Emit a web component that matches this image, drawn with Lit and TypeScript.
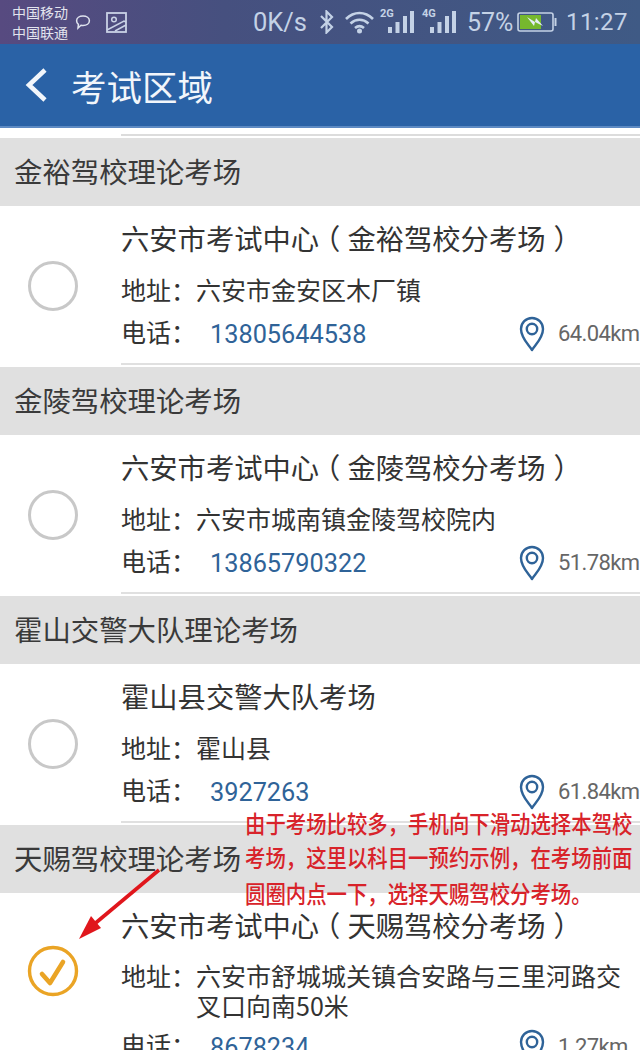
import { LitElement, html, css, svg } from "lit";
import { customElement } from "lit/decorators.js";

const items = [
  { section: "金裕驾校理论考场", title: "六安市考试中心（金裕驾校分考场）", addr: "六安市金安区木厂镇", tel: "13805644538", dist: "64.04km" },
  { section: "金陵驾校理论考场", title: "六安市考试中心（金陵驾校分考场）", addr: "六安市城南镇金陵驾校院内", tel: "13865790322", dist: "51.78km" },
  { section: "霍山交警大队理论考场", title: "霍山县交警大队考场", addr: "霍山县", tel: "3927263", dist: "61.84km" },
  { section: "天赐驾校理论考场", title: "六安市考试中心（天赐驾校分考场）", addr: "六安市舒城城关镇合安路与三里河路交叉口向南50米", tel: "8678234", dist: "1.27km", checked: true },
];

const pin = svg`<svg class="pin" width="26" height="36" viewBox="0 0 26 36"><path d="M13 34C9 28 2 22 2 13a11 11 0 0 1 22 0c0 9-7 15-11 21z" fill="none" stroke="#2f6398" stroke-width="2.4" stroke-linejoin="round"/><circle cx="13" cy="13" r="5.2" fill="none" stroke="#2f6398" stroke-width="2.4"/></svg>`;

const check = svg`<svg width="52" height="52" viewBox="0 0 52 52"><circle cx="26" cy="26" r="23.5" fill="none" stroke="#eaa425" stroke-width="3.4"/><path d="M15 29l8 9 13-21" fill="none" stroke="#eaa425" stroke-width="4.6" stroke-linecap="round" stroke-linejoin="round"/></svg>`;

const bars = svg`<path d="M9 27h4v6H9zM16.500 22h4v11h-4zM24 16h4v17h-4zM31 11h4v22h-4z" fill="#c4d2e6"/>`;

function titleParts(t: string) {
  const m = t.match(/^(.*)（(.*)）$/);
  if (!m) return t;
  return html`${m[1]}<span class="lp">（</span>${m[2]}<span class="rp">）</span>`;
}

@customElement("app-root")
export class AppRoot extends LitElement {
  static styles = css`
    :host { display: block; width: 640px; height: 1050px; overflow: hidden; position: relative; background: #fff;
      font-family: Roboto, "Noto Sans CJK SC", sans-serif; color: #333; }
    .status { height: 44px; display: flex; align-items: center; padding: 0 0 0 12px; box-sizing: border-box;
      background: linear-gradient(90deg, #574a80 0%, #46507f 35%, #3f5a85 100%); color: #c4d2e6; }
    .carrier { font-size: 14px; line-height: 20px; font-family: "Noto Sans CJK SC", sans-serif; color: #e2e4ee; width: 63px; flex: none; }
    .status svg { flex: none; display: block; }
    .msg { margin-left: 0; }
    .img { margin-left: 15px; }
    .speed { font-size: 25.500px; margin-left: 126px; width: 53px; flex: none; }
    .bt { margin-left: 13px; }
    .wifi { margin-left: 10px; }
    .sig { margin-left: 4px; }
    .sig2 { margin-left: 6px; }
    .pct { font-size: 25px; margin-left: 10px; width: 47px; flex: none; }
    .batt { margin-left: 3px; }
    .time { font-size: 24px; margin-left: 9px; letter-spacing: .4px; }
    .bar { height: 84px; background: #2a62a6; border-bottom: 2px solid #5d8ac3; box-sizing: border-box; display: flex; align-items: center;
      color: #f2f6fb; font-family: "Noto Sans CJK SC", sans-serif; font-size: 35.500px; padding-left: 25px; gap: 23px; }
    .bar svg { display: block; }
    .top { height: 9.600px; display: flex; justify-content: flex-end; align-items: flex-end; box-sizing: border-box; padding-bottom: 1.600px; }
    .top i { display: block; width: 519px; height: 2px; background: #dcdcdc; }
    .sec { height: 68.400px; background: #e0e0e0; display: flex; align-items: center; padding-left: 14px; padding-bottom: 3px; box-sizing: border-box;
      font-family: "Noto Sans CJK SC", sans-serif; font-size: 28.400px; color: #3a3a3a; }
    .card { display: flex; height: 160.600px; box-sizing: border-box; position: relative; }
    .card.tall { height: auto; }
    .radio { width: 121px; height: 160px; flex: none; display: flex; align-items: center; justify-content: center; padding-right: 15px; box-sizing: border-box; }
    .tall .radio { height: 156px; }
    .dot { width: 50px; height: 50px; border-radius: 50%; border: 3px solid #c8c8c8; box-sizing: border-box; }
    .body { flex: 1; min-width: 0; border-bottom: 2px solid #e0e0e0; margin-bottom: 2px; box-sizing: border-box; padding-top: 10px; }
    .title { font-size: 28.300px; line-height: 44px; color: #333; white-space: nowrap; font-family: "Noto Sans CJK SC", sans-serif; }
    .lp, .rp { display: inline-block; }
    .lp { transform: translateX(-7px); }
    .rp { transform: translateX(8px); }
    .row { display: flex; font-size: 25px; line-height: 30px; margin-top: 14px; padding-right: 10px; font-family: "Noto Sans CJK SC", sans-serif; }
    .tall .row { margin-top: 13px; }
    .row .lbl { width: 75px; flex: none; }
    .tel { display: flex; align-items: center; font-size: 25px; height: 36px; margin-top: 12px; font-family: "Noto Sans CJK SC", sans-serif; }
    .tall .tel { margin-top: 9px; }
    .tel .lbl { width: 89px; flex: none; line-height: 30px; margin-bottom: 6px; }
    .num { font-family: Roboto, sans-serif; font-size: 25.300px; color: #2f6398; flex: 1; margin-top: 1px; }
    .tel .pin { flex: none; margin-right: 13px; }
    .dist { font-family: Roboto, sans-serif; font-size: 22px; letter-spacing: -.6px; color: #666; width: 82px; white-space: nowrap; flex: none; }
    .note { position: absolute; left: 245px; top: 812px; font-family: "Noto Sans CJK SC", sans-serif; font-size: 20.400px; font-weight: 500; line-height: 30.400px; color: #d8232a; white-space: nowrap; transform: scaleY(1.15); }
    .arrow { position: absolute; left: 70px; top: 860px; }
  `;

  render() {
    return html`
      <div class="status">
        <div class="carrier">中国移动<br />中国联通</div>
        <svg class="msg" width="16" height="16" viewBox="0 0 16 16"><path d="M8 2c3.600 0 6.400 2 6.400 4.800S11.600 11.500 8 11.500c-.7 0-1.400-.1-2-.2L3 14l.4-3.600C2.200 9.500 1.600 8.200 1.600 6.800 1.600 4 4.400 2 8 2z" fill="none" stroke="#dfe3ee" stroke-width="1.500"/></svg>
        <svg class="img" width="21" height="21" viewBox="0 0 21 21"><rect x="1" y="1" width="19" height="19" fill="none" stroke="#c9d2e6" stroke-width="1.800"/><circle cx="8" cy="7.500" r="2.300" fill="none" stroke="#c9d2e6" stroke-width="1.500"/><path d="M1 18L18 9l2 1M9 19l11-6" fill="none" stroke="#c9d2e6" stroke-width="1.500"/></svg>
        <span class="speed">0K/s</span>
        <svg class="bt" width="15" height="24" viewBox="0 0 15 24"><path d="M2 6l11 11-5.500 5.500V1.500L13 7 2 18" fill="none" stroke="#c4d2e6" stroke-width="2.200"/></svg>
        <svg class="wifi" width="31" height="24" viewBox="0 0 31 24"><path d="M2 9c8-8 19-8 27 0M6.500 13.500c5.500-5 12.500-5 18 0M11 18c3-2.500 6-2.500 9 0" fill="none" stroke="#c4d2e6" stroke-width="2.600"/><circle cx="15.500" cy="21" r="2.500" fill="#c4d2e6"/></svg>
        <svg class="sig" width="36" height="44" viewBox="0 0 36 44"><text x="1" y="17" font-size="11" font-weight="700" font-family="Roboto" fill="#c4d2e6">2G</text>${bars}</svg>
        <svg class="sig2" width="36" height="44" viewBox="0 0 36 44"><text x="1" y="17" font-size="11" font-weight="700" font-family="Roboto" fill="#c4d2e6">4G</text>${bars}</svg>
        <span class="pct">57%</span>
        <svg class="batt" width="40" height="20" viewBox="0 0 40 20"><rect x="1" y="1" width="35" height="18" rx="2" fill="none" stroke="#c4d2e6" stroke-width="1.600"/><rect x="3" y="3" width="21" height="14" fill="#76b82e"/><rect x="37.500" y="6" width="2" height="8" fill="#c4d2e6"/><path d="M10 5l8 5 1-4 7 8-8-4-1 4z" fill="#e6eef6"/></svg>
        <span class="time">11:27</span>
      </div>
      <div class="bar">
        <svg width="23" height="34" viewBox="0 0 23 34"><path d="M20 2L4 17l16 15" fill="none" stroke="#f2f6fb" stroke-width="4.600"/></svg>
        <span>考试区域</span>
      </div>
      <div class="top"><i></i></div>
      ${items.map(
        (it) => html`
          <div class="sec">${it.section}</div>
          <div class="card ${it.checked ? "tall" : ""}">
            <div class="radio">${it.checked ? check : html`<div class="dot"></div>`}</div>
            <div class="body">
              <div class="title">${titleParts(it.title)}</div>
              <div class="row"><span class="lbl">地址：</span><span>${it.addr}</span></div>
              <div class="tel"><span class="lbl">电话：</span><span class="num">${it.tel}</span>${pin}<span class="dist">${it.dist}</span></div>
            </div>
          </div>
        `
      )}
      <div class="note">由于考场比较多，手机向下滑动选择本驾校<br />考场，这里以科目一预约示例，在考场前面<br />圆圈内点一下，选择天赐驾校分考场。</div>
      <svg class="arrow" width="100" height="85" viewBox="0 0 100 85"><path d="M89 10L22 66" stroke="#e0161c" stroke-width="3.600"/><path d="M9 79l12-23 10 12z" fill="#e0161c"/></svg>
    `;
  }
}
